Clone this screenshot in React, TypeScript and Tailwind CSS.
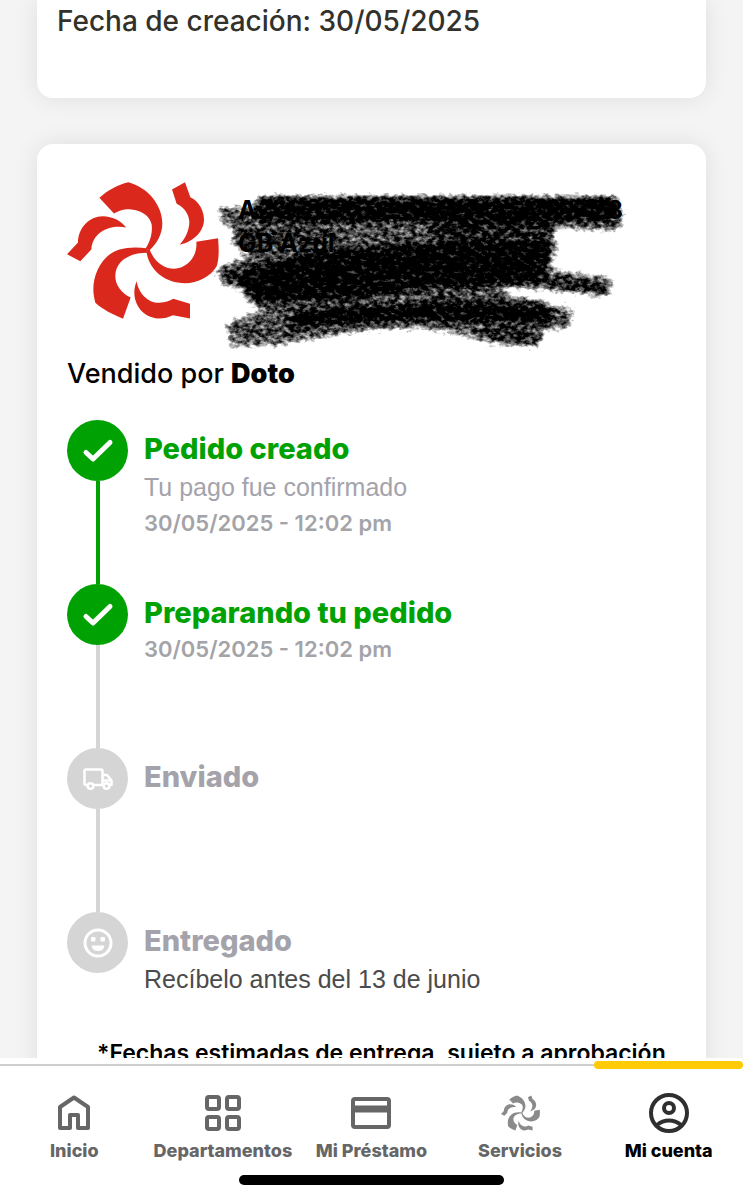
import type { ReactNode } from "react";
import clsx from "clsx";

type Paso = {
  titulo: string;
  detalle?: string;
  fecha?: string;
  completado: boolean;
  icono: ReactNode;
};

type Pestana = {
  nombre: string;
  href: string;
  icono: ReactNode;
  activa?: boolean;
};

function Molino({ className }: { className?: string }) {
  return (
    <svg viewBox="83 68 456 410" className={className} fill="currentColor" aria-hidden="true">
      <path d="M180 115 C205 92 235 76 267 68 C330 85 369 140 369 192 C369 225 352 252 331 272 L318 268 C334 245 340 218 337 195 C330 160 290 148 262 149 C248 150 235 155 224 162 Z" />
      <path d="M331 270 C345 308 375 328 405 328 C445 325 475 290 471 247 L536 236 C540 275 538 303 532 320 C515 350 475 371 437 371 C375 371 328 330 321 274 Z" />
      <path d="M326 267 C295 262 265 263 240 270 C190 285 162 340 162 390 C162 405 165 418 168 430 C190 450 220 465 251 478 L274 414 C245 400 228 375 228 350 C228 308 265 280 324 280 Z" />
      <path d="M83 284 L116 249 C116 205 150 170 190 170 C220 170 248 185 260 204 C215 195 160 215 156 270 L123 305 Z" />
      <path d="M398 90 L437 68 L453 113 C480 125 494 155 494 180 C494 215 465 245 421 256 C440 235 450 210 450 187 C449 165 435 143 412 133 Z" />
      <path d="M292 365 C297 400 325 430 360 430 C378 429 390 425 402 418 L452 433 V477 L401 467 C388 473 375 477 357 477 C310 475 285 435 285 400 C285 385 288 375 292 365 Z" />
    </svg>
  );
}

// Tachadura a lápiz sobre el nombre del producto
function Tachadura() {
  return (
    <svg
      viewBox="212 186 420 168"
      className="absolute -left-[26px] top-[4px] h-[168px] w-[420px]"
      aria-hidden="true"
    >
      <defs>
        <filter id="grafito" x="212" y="186" width="420" height="168" filterUnits="userSpaceOnUse" colorInterpolationFilters="sRGB">
          <feTurbulence type="fractalNoise" baseFrequency="0.18 0.24" numOctaves="3" seed="7" />
          <feColorMatrix values="0 0 0 0 0  0 0 0 0 0  0 0 0 0 0  1 0 0 0 0" result="grano" />
          <feGaussianBlur in="SourceGraphic" stdDeviation="3" result="trazo" />
          <feComposite in="trazo" in2="grano" operator="arithmetic" k2="1.7" k3="1.5" k4="-1.3" />
          <feGaussianBlur stdDeviation="0.6" />
        </filter>
      </defs>
      <g filter="url(#grafito)" fill="#000" stroke="#000">
        <g fillOpacity="0.74" strokeWidth="0">
          <path d="M217 206 L256 207 L262 195 L618 195 L625 226 L612 232 L552 229 L559 248 L550 269 L613 277 L610 298 L560 292 L500 288 L512 296 L547 300 L552 305 L574 307 L571 329 L544 331 L541 348 L498 346 L460 336 L420 329 L360 332 L320 339 L280 346 L230 348 L225 323 L262 309 L248 304 L240 290 L221 286 L215 267 L248 256 L234 248 L232 228 L221 224 Z" />
        </g>
        <g fill="none" strokeLinecap="round">
          <path d="M264 209 L606 209" strokeWidth="24" />
          <path d="M236 238 L330 236" strokeWidth="16" strokeOpacity="0.3" />
          <path d="M440 230 L544 228" strokeWidth="20" strokeOpacity="0.6" />
          <path d="M298 320 C360 311 450 312 545 314" strokeWidth="17" />
          <path d="M430 302 L535 308" strokeWidth="12" strokeOpacity="0.4" />
          <path d="M555 283 L602 288" strokeWidth="13" strokeOpacity="0.5" />
          <path d="M490 331 L530 336" strokeWidth="14" strokeOpacity="0.5" />
          <path d="M228 274 L250 280" strokeWidth="14" strokeOpacity="0.5" />
        </g>
        <path
          strokeWidth="0"
          d="M240 270 L310 253 L400 245 L470 241 L552 241 L545 282 L510 285 L430 288 L350 298 L260 303 L244 286 Z"
        />
      </g>
    </svg>
  );
}

const IconoCheck = () => (
  <svg viewBox="0 0 32 32" className="size-8" fill="none" stroke="currentColor" strokeWidth="5" strokeLinecap="round" strokeLinejoin="round">
    <path d="M4 17.500 L11 24 L28 7.500" />
  </svg>
);

const IconoCamion = () => (
  <svg viewBox="0 0 32 32" className="size-8" fill="none" stroke="currentColor" strokeWidth="2.500">
    <path d="M5.500 22 H4 Q2.500 22 2.500 20.500 V8 Q2.500 6.500 4 6.500 H19 Q20.500 6.500 20.500 8 V22 H11.500" strokeLinejoin="round" />
    <path d="M20.500 12 H25 L29.500 17.500 V22 H27.500" strokeLinejoin="round" />
    <path d="M21 17.500 H29" />
    <circle cx="8.500" cy="23" r="2.800" />
    <circle cx="24.500" cy="23" r="2.800" />
  </svg>
);

const IconoCara = () => (
  <svg viewBox="0 0 32 32" className="size-8" fill="currentColor">
    <circle cx="16" cy="16" r="13" fill="none" stroke="currentColor" strokeWidth="3" />
    <rect x="9" y="10" width="4.500" height="4.500" rx="1" />
    <rect x="18.500" y="10" width="4.500" height="4.500" rx="1" />
    <path d="M9.500 18.500 H22.500 Q21.500 24 16 24 Q10.500 24 9.500 18.500 Z" />
  </svg>
);

const pasos: Paso[] = [
  {
    titulo: "Pedido creado",
    detalle: "Tu pago fue confirmado",
    fecha: "30/05/2025 - 12:02 pm",
    completado: true,
    icono: <IconoCheck />,
  },
  {
    titulo: "Preparando tu pedido",
    fecha: "30/05/2025 - 12:02 pm",
    completado: true,
    icono: <IconoCheck />,
  },
  { titulo: "Enviado", completado: false, icono: <IconoCamion /> },
  {
    titulo: "Entregado",
    detalle: "Recíbelo antes del 13 de junio",
    completado: false,
    icono: <IconoCara />,
  },
];

const pestanas: Pestana[] = [
  {
    nombre: "Inicio",
    href: "#inicio",
    icono: (
      <svg viewBox="0 0 40 40" className="size-10" fill="none" stroke="currentColor" strokeWidth="4" strokeLinejoin="round">
        <path d="M6 14 L20 4.500 L34 14 V35 H24 V22 H16 V35 H6 Z" />
      </svg>
    ),
  },
  {
    nombre: "Departamentos",
    href: "#departamentos",
    icono: (
      <svg viewBox="0 0 40 40" className="size-10" fill="none" stroke="currentColor" strokeWidth="4">
        <rect x="4" y="4" width="12" height="12" rx="2" />
        <rect x="24" y="4" width="12" height="12" rx="2" />
        <rect x="4" y="24" width="12" height="12" rx="2" />
        <rect x="24" y="24" width="12" height="12" rx="2" />
      </svg>
    ),
  },
  {
    nombre: "Mi Préstamo",
    href: "#prestamo",
    icono: (
      <svg viewBox="0 0 40 40" className="size-10" fill="none" stroke="currentColor" strokeWidth="4">
        <rect x="2" y="6" width="36" height="28" rx="2" />
        <path d="M2 16 H38" strokeWidth="7" />
      </svg>
    ),
  },
  { nombre: "Servicios", href: "#servicios", icono: <Molino className="h-10 w-[39px] text-[#8a8a8a]" /> },
  {
    nombre: "Mi cuenta",
    href: "#cuenta",
    activa: true,
    icono: (
      <svg viewBox="0 0 40 40" className="size-10 text-[#2f2f2f]" fill="none" stroke="currentColor" strokeWidth="4">
        <circle cx="20" cy="20" r="18" />
        <circle cx="20" cy="15" r="5" />
        <path d="M8 32 C15 26 25 26 32 32" />
      </svg>
    ),
  },
];

function Seguimiento() {
  return (
    <ol className="mt-7">
      {pasos.map((paso, i) => (
        <li
          key={paso.titulo}
          className={clsx("flex gap-4", i < pasos.length - 1 && "min-h-[164px]")}
        >
          <div className="flex flex-col items-center">
            <span
              className={clsx(
                "flex size-[61px] items-center justify-center rounded-full text-white",
                paso.completado ? "bg-[#00a203]" : "bg-[#d5d5d5]"
              )}
            >
              {paso.icono}
            </span>
            {i < pasos.length - 1 && (
              <span
                className={clsx(
                  "w-1 flex-1",
                  pasos[i + 1].completado ? "bg-[#00a203]" : "bg-[#d5d5d5]"
                )}
              />
            )}
          </div>
          <div className="pt-[11px]">
            <h3
              className={clsx(
                "text-[29px] leading-9 font-extrabold",
                paso.completado ? "text-[#00a203]" : "text-[#a4a3ab]"
              )}
            >
              {paso.titulo}
            </h3>
            {paso.detalle && (
              <p
                className={clsx(
                  "pt-0.5 font-['Liberation_Sans',Arial,sans-serif] text-[25px] leading-9",
                  paso.completado ? "text-[#a4a3ab]" : "text-[#4b4b4b]"
                )}
              >
                {paso.detalle}
              </p>
            )}
            {paso.fecha && (
              <p className="text-[22px] leading-9 font-semibold text-[#a3a3a8]">{paso.fecha}</p>
            )}
          </div>
        </li>
      ))}
    </ol>
  );
}

export default function App() {
  return (
    <div className="flex h-screen flex-col bg-white font-[Inter,'Liberation_Sans',sans-serif] text-black">
      <main className="min-h-0 flex-1 overflow-hidden bg-[#f4f4f4] px-[37px]">
        <section className="rounded-b-2xl bg-white px-5 pb-14 shadow-[0_0_24px_rgba(0,0,0,0.09)]">
          <p className="text-[28px] leading-[42px] font-medium text-[#32312b]">
            Fecha de creación: 30/05/2025
          </p>
        </section>

        <section className="mt-[46px] rounded-2xl bg-white px-[30px] pt-[38px] pb-8 shadow-[0_0_24px_rgba(0,0,0,0.09)]">
          <div className="flex items-start gap-[19px]">
            <Molino className="h-[137px] w-[152px] shrink-0 text-[#da291c]" />
            <div className="relative h-[137px] flex-1">
              <Tachadura />
              <div className="relative w-[385px] pt-3 text-[25px] leading-[33px] font-bold">
                <p className="flex justify-between">
                  <span>A</span>
                  <span>28</span>
                </p>
                <p>GB Azul</p>
              </div>
            </div>
          </div>

          <p className="mt-[37px] text-[27px] leading-9 font-medium">
            Vendido por <strong className="font-black">Doto</strong>
          </p>

          <Seguimiento />

          <p className="mt-10 pl-[30px] text-[23px] leading-8 font-semibold whitespace-nowrap">
            *Fechas estimadas de entrega, sujeto a aprobación
          </p>
        </section>
      </main>

      <nav className="shrink-0 bg-white pt-1.5 pb-[15px]">
        <ul className="flex border-t-2 border-[#cfcfcf]">
          {pestanas.map((p) => (
            <li key={p.nombre} className="relative flex-1 basis-0">
              {p.activa && (
                <span className="absolute inset-x-0 -top-[5px] h-2 rounded-full bg-[#ffcb05]" />
              )}
              <a
                href={p.href}
                aria-current={p.activa ? "page" : undefined}
                className={clsx(
                  "flex flex-col items-center pt-[27px] text-[18px] leading-6 font-extrabold whitespace-nowrap",
                  p.activa ? "text-black" : "text-[#666666]"
                )}
              >
                {p.icono}
                <span className="mt-1.5">{p.nombre}</span>
              </a>
            </li>
          ))}
        </ul>
        <div className="mx-auto mt-3 h-2.5 w-[265px] rounded-full bg-black" />
      </nav>
    </div>
  );
}
